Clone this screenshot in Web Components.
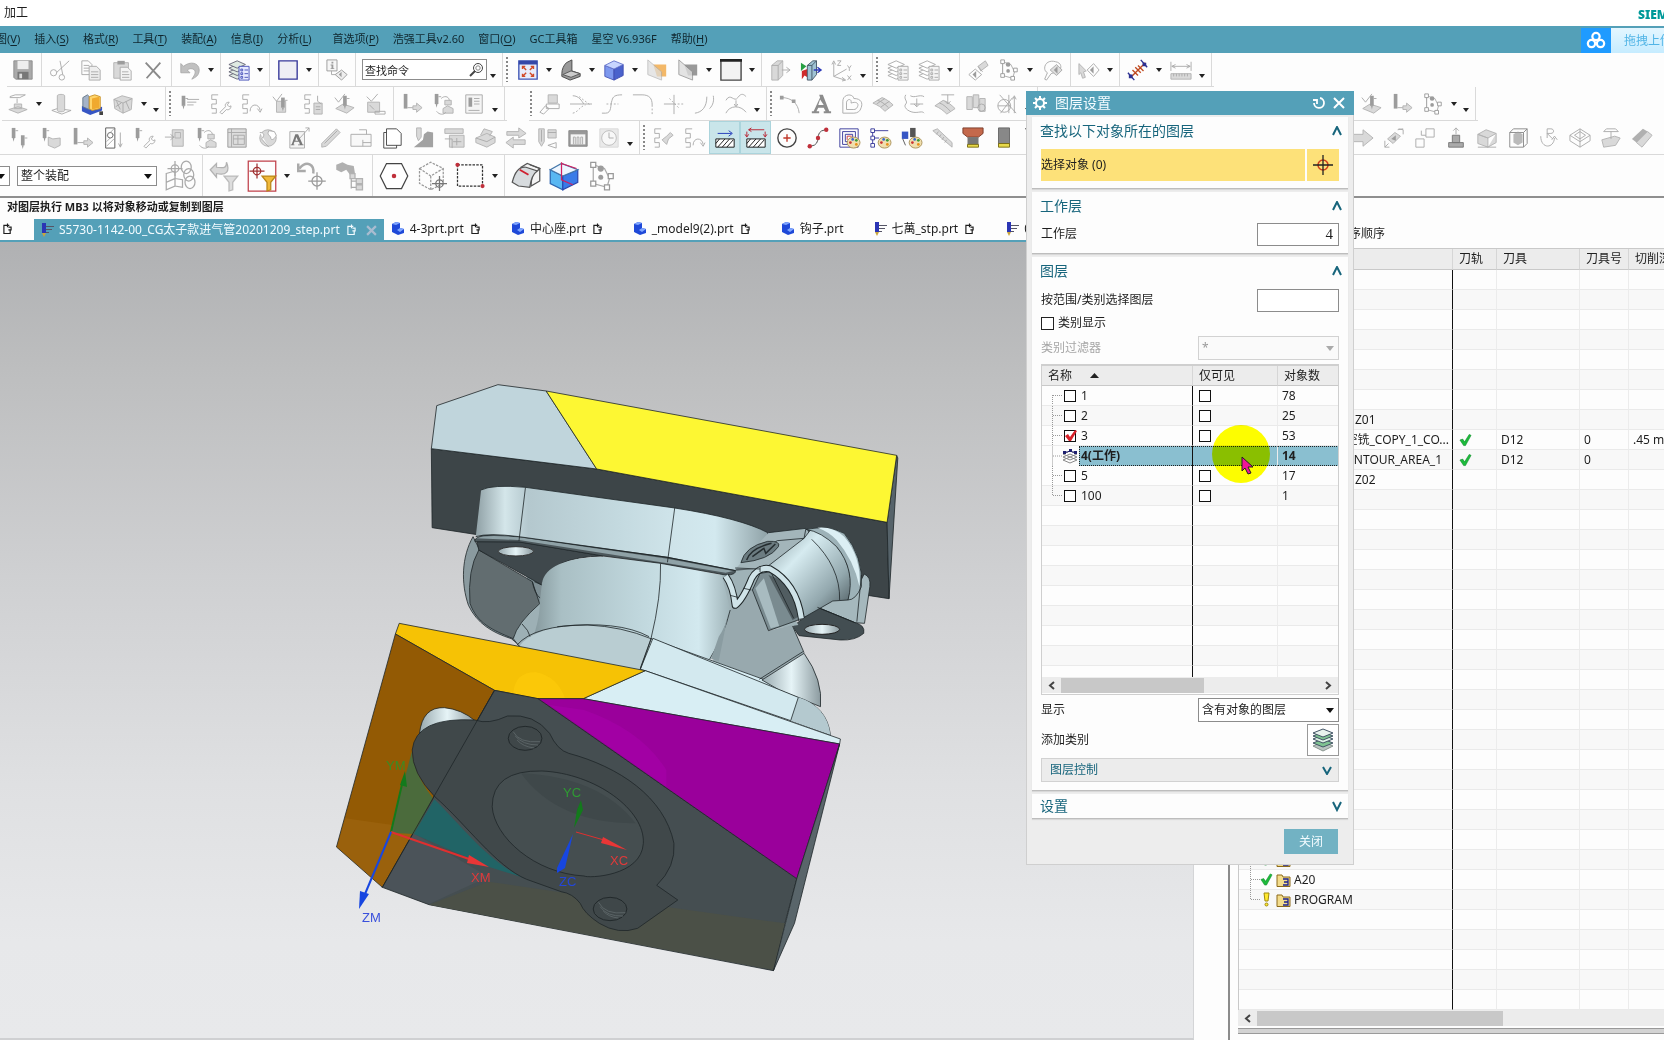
<!DOCTYPE html>
<html lang="zh-CN">
<head>
<meta charset="utf-8">
<title>加工</title>
<style>
html,body{margin:0;height:100%}
body{font-family:"Noto Sans","Noto Sans CJK SC",sans-serif;font-size:12px;line-height:16px;color:#1e1e1e;background:#fdfdfd;overflow:hidden}
</style>
</head>
<body>
<nx-app></nx-app>
<script>
const SHEET = '*{box-sizing:border-box}button{font:inherit;color:inherit;background:none;border:0;padding:0;margin:0}input,select{font:inherit;color:inherit;margin:0;border-radius:0}a{color:inherit;text-decoration:none}';
function define(name, css, html, init) {
  customElements.define(name, class extends HTMLElement {
    connectedCallback() {
      if (this.shadowRoot) return;
      const root = this.attachShadow({ mode: 'open' });
      root.innerHTML = '<style>' + SHEET + css + '</style>' + (typeof html === 'function' ? html(this) : html);
      if (init) init(root, this);
    }
  });
}

/* ---------- icon library, 24 x 24 grid ---------- */
const tool = (x, y) => `<path class="d" d="M${x} ${y}h4v11h-4z"/><path class="d" d="M${x + 1} ${y + 11}h2l-1 4z"/><path class="g" d="M${x + 4} ${y + 3}h3"/>`;
const squig = '<path class="g" d="M10 2H3v5h5v5H3v5h5v5H3"/>';
const stack = (c, f) => `<g fill="${f}" stroke="${c}"><path d="M1 18l9-4 9 4-9 4z"/><path d="M1 14l9-4 9 4-9 4z"/><path d="M1 10l9-4 9 4-9 4z"/><path d="M1 6l9-4 9 4-9 4z"/></g>`;
const list = (c, f) => `<path fill="${f}" stroke="${c}" d="M12 8h11v15H12z"/><path stroke="${c}" fill="none" d="M14 11h2v2h-2zM14 15h2v2h-2zM14 19h2v2h-2zM18 12h4M18 16h4M18 20h4"/>`;
const palette = '<ellipse cx="17" cy="17" rx="7" ry="6" fill="#f0dfae" stroke="#a89058"/><circle cx="13.5" cy="17" r="1.5" fill="#c33"/><circle cx="16" cy="13.5" r="1.5" fill="#3a6ad0"/><circle cx="20" cy="14.5" r="1.5" fill="#3a9a3a"/><circle cx="20" cy="19" r="1.5" fill="#e8901a"/>';
const wrench = '<path class="g" d="M12 21l6-6c-1-3 1-5 4-5l-2 3 2 2 2-1c0 3-2 5-5 4l-5 5z"/>';
const nodes = '<path class="g" d="M5 3l9 3 4 8-2 7-11-3zM5 3v15"/><path fill="#fff" stroke="#999" d="M3 1h4v4H3zM3 16h4v4H3zM14 19h4v4h-4zM17 10h4v4h-4z"/><circle class="d" cx="11" cy="6" r="2.5"/><circle class="d" cx="11" cy="13" r="2"/>';
const funnel = (x, y, f, s) => `<path fill="${f}" stroke="${s}" d="M${x} ${y}h11l-4 5v6l-3 1v-7z"/>`;
const cross = (x, y, r, c) => `<circle cx="${x}" cy="${y}" r="${r}" fill="none" stroke="${c}"/><path stroke="${c}" d="M${x - r - 3} ${y}h${2 * r + 6}M${x} ${y - r - 3}v${2 * r + 6}"/>`;
const I = {
  save: '<path fill="#aaa" stroke="#8e8e8e" d="M2 2h20v20H4l-2-2z"/><path fill="#eee" d="M6 2h12v9H6z"/><path fill="#777" d="M6 14h12v8H6z"/><path fill="#ddd" d="M8 16h3v5H8z"/>',
  cut: '<path class="g" d="M22 2L8 15M12 2l3 15"/><circle class="g" cx="5" cy="15" r="3.4"/><circle class="g" cx="14" cy="20" r="3"/>',
  copy: '<path class="g" d="M2 2h7l4 4v11H2zM4 7h6M4 10h6M4 13h6"/><path fill="#eee" stroke="#aaa" d="M10 8h8l4 4v11H10z"/><path class="g" d="M12 14h8M12 17h8M12 20h8"/>',
  paste: '<path class="f" d="M3 4h16v17H3z"/><path class="d" d="M7 2h8v4H7z"/><path fill="#f4f4f4" stroke="#aaa" d="M10 9h8l4 4v10H10z"/><path class="g" d="M12 14h7M12 17h8M12 20h8"/>',
  del: '<path stroke="#8a8a8a" stroke-width="2" d="M4 4l16 17M20 4L5 21"/>',
  undo: '<path fill="#c0c0c0" stroke="#aaa" d="M2 5l3 3c7-6 17-4 17 4 0 6-4 8-8 10 2-3 5-7 3-10-2-2-6-2-8 0l3 3H2z"/>',
  layers: stack('#667', '#dfeae2') + list('#4650b8', '#e6eaff'),
  layersG: stack('#aaa', '#fff') + list('#aaa', '#f4f4f4'),
  layersG2: stack('#aaa', '#fff') + list('#aaa', '#f4f4f4'),
  square: '<path fill="#eeeef4" stroke="#37399a" stroke-width="1.5" d="M2 2h20v20H2z"/>',
  info: '<path fill="#f6f6f6" stroke="#999" d="M1 1h11v12H1z"/><path class="d" d="M6 3h2v2H6zM5 6h3v4h1v1H5v-1h1V7H5z"/><path fill="#eee" stroke="#999" d="M10 17l7-5 6 5-6 6z"/><path class="d" d="M14 17l3-3v6z"/><path class="g" d="M6 13v4h4"/>',
  fit: '<path fill="#e8ecfa" stroke="#3f55b5" stroke-width="1.5" d="M2 2h20v20H2z"/><path fill="#3547a8" d="M2 2h20v4H2z"/><path stroke="#d04a28" stroke-width="1.5" fill="none" d="M6 11V8h3M15 8h3v3M18 16v3h-3M9 19H6v-3M6 8l4 4M18 8l-4 4M18 19l-4-4M6 19l4-4"/>',
  orient: '<path fill="#999" stroke="#444" d="M2 16c0-5 2-9 5-12l6-3v12l9 3v3l-11 4-9-4z"/><path fill="#ccc" stroke="#555" d="M3 17l9-4 10 3-10 4z"/>',
  cube: '<path fill="#7d98ee" stroke="#4a59b8" d="M2 7v12l10 4V11z"/><path fill="#4a62cc" stroke="#3f4db0" d="M22 6v12l-10 5V11z"/><path fill="#c8d6ff" stroke="#6675cc" d="M2 7l10-5 10 4-10 5z"/>',
  plane: '<path fill="#f3b868" d="M8 6h14v13H12z"/><path fill="#ddd" stroke="#aaa" d="M2 1l15 13v9L2 17z" opacity=".7"/>',
  plane2: '<path fill="#999" d="M8 6h14v12H12z"/><path fill="#ddd" stroke="#888" d="M2 1l15 13v9L2 17z" opacity=".8"/>',
  window: '<path fill="#f2f2f2" stroke="#444" stroke-width="1.5" d="M1 1h22v22H1z"/><path fill="#222" d="M0 0h24v3H0z"/>',
  section: '<path class="f" d="M3 7l6-5h6v16l-5 5H3z"/><path class="g" d="M10 7v16M3 7h7l5-5"/><path class="g" d="M14 12h8m-3-3l4 3-4 3"/>',
  sectionC: '<path fill="#27a043" d="M1 4l6 4-6 5z"/><path fill="#cf2b2b" d="M2 13l6-2v9l-3-2-3 4z"/><path fill="#9fc3d4" stroke="#456" d="M8 7l6-5h4v15l-5 6H8z"/><path fill="none" stroke="#456" d="M8 7h5l5-5M13 7v16"/><path stroke="#2c39b8" stroke-width="1.5" fill="none" d="M15 12h7m-3-3l4 3-4 3"/>',
  csys: '<path class="g" d="M3 4v15l12 4M3 19l14-8M1 6l2-4 2 4M12 20l4 3-4 1"/><path class="g" d="M7 2h4L7 7h4M18 7l2 3 2-3M20 10v3M18 18l4 5M22 18l-4 5"/>',
  brush: '<path class="f" d="M12 8l8-6 3 5-8 6z"/><path class="g" d="M12 8l5 6M2 17l7-6 7 6-7 6z"/><path class="d" d="M6 17l4-4v8z"/>',
  nodes,
  palG: '<path class="g" d="M4 10c0-6 6-9 12-7 6 1 7 6 4 10l-9 3-5 7-2-1 3-7c-2-1-3-3-3-5z"/><path fill="#ddd" stroke="#aaa" d="M10 12l7-6 6 6-6 6z"/><path class="d" d="M14 12l4-4v8z"/>',
  dia: '<path class="f" d="M1 5l8 8-3 1 2 6-3 1-2-6-2 2z"/><path class="g" d="M10 12l7-7 6 7-6 7z"/><path class="d" d="M13 12l4-4v8z"/>',
  measure: '<path stroke="#c04a20" stroke-width="1.5" d="M5 19L20 4M6 12l6 6M9 9l6 6M12 7l6 6"/><path stroke="#2d3192" stroke-width="1.5" d="M1 15l7 8M15 1l7 8"/><path fill="#2d3192" d="M2 17h4v4H2zM17 4h4v4h-4z"/>',
  ruler: '<path class="g" d="M1 3v10M23 3v10M2 8h20M6 6L2 8l4 2M18 6l4 2-4 2"/><path class="f" d="M1 16h22v6H1z"/><path class="g" d="M4 16v3M7 16v3M10 16v3M13 16v3M16 16v3M19 16v3"/>',
  feat: '<path class="f" d="M2 18l10-3 10 3-10 4zM8 12h8v5H8z"/><path class="g" d="M3 4l6-2h11l-6 3H3M11 6v5"/>',
  block: '<path class="f" d="M8 3c0-2 8-2 8 0v16c0 2-8 2-8 0z"/><path class="g" d="M2 19l6-2M16 18l7 1-10 4-11-4"/>',
  asm: '<path fill="#3656c4" d="M1 14l9 4 13-3v4l-13 5-9-4z"/><path fill="#a5b3c8" stroke="#678" d="M2 5l5-3 2 2v14l-7-3z"/><path fill="#ffd469" stroke="#c8922a" d="M9 4l6-2 6 2v13l-9 2-3-2z"/><path fill="#f0a92e" d="M12 6l8-2v12l-8 2z"/><path fill="#444" d="M20 20h4v4h-4z"/>',
  crack: '<path class="f" d="M2 7l9-4 11 3-1 12-9 4-9-5z"/><path class="g" d="M2 7l10 4 10-5M12 11v11M5 9l4 9M15 9l4 9M4 15l6-4"/>',
  t1: tool(4, 3) + '<path class="g" d="M10 7h13M10 10h10M10 13h7"/>',
  t2: squig + wrench,
  t3: squig + '<path class="g" d="M11 20c0-9 10-9 11-1m-3-2l3 4 2-4"/>',
  t4: '<path class="f" d="M6 9h10v12H6z"/>' + tool(11, 5) + '<path class="g" d="M2 4l4 5 6-8"/>',
  t5: squig + '<path class="f" d="M13 11h9v12h-9z"/><path class="g" d="M17 3v6l4 3M15 15h5M15 18h5"/>',
  t6: '<path class="f" d="M3 17l8-5 12 4-8 6z"/>' + tool(11, 3) + '<path class="g" d="M2 5l4 5 7-9"/>',
  t7: '<path class="f" d="M4 10h13v11H4z"/><path class="g" d="M3 4l5 5 7-8M6 13l5 5M12 20h11v3H12z"/>',
  t8: '<path class="d" d="M3 1h4v16H3z"/><path class="g" d="M7 16h6"/><path class="f" d="M13 14h4v-3l6 5-6 5v-3h-4z"/>',
  t9: '<path class="f" d="M14 8h7v5h-7zM12 17l5-3 6 3v5H12z"/>' + tool(3, 1) + '<path class="g" d="M10 6c3-3 8-3 9 2M5 20c3 4 8 4 10 1"/>',
  t10: '<path fill="#f4f4f4" stroke="#aaa" d="M3 2h18v20H3z"/><path class="d" d="M6 5h4v10H6z"/><path class="g" d="M12 6h6M12 9h6M12 12h6M6 19h12"/>',
  c1: '<path class="f" d="M10 2h10v9H10z"/><path class="g" d="M8 12h14v5H8zM1 21l6-7 4 3-6 6z"/>',
  c2: '<path class="g" d="M0 12h24M3 3c7 0 10 6 12 9"/><path class="g" stroke-dasharray="2 2" d="M10 4l12 9M3 22c6-1 7-7 14-9"/>',
  c3: '<path class="g" d="M1 22h4c7 0 5-9 7-14 1-4 3-6 11-6"/><path class="g" stroke-dasharray="2 2" d="M6 12h13"/>',
  c4: '<path class="g" d="M1 2h10c8 0 11 4 11 11"/><path class="g" stroke-dasharray="2 2" d="M22 13v10"/>',
  c5: '<path class="g" d="M1 12h11v11M12 2v10"/><path class="g" stroke-dasharray="2 2" d="M12 12h12M7 6l10 10"/>',
  c6: '<path class="g" d="M1 22c8-1 13-7 13-18M17 17c4-4 5-9 4-14"/>',
  c7: '<path class="g" d="M1 8c5-9 9 3 13-3s7-3 9-1M1 22c4-9 16-9 22-1M12 8v6m-2-2l2 3 2-3"/>',
  arc: '<path class="g" d="M3 5c10 0 18 6 19 17"/><path class="d" d="M1 3h4v4H1zM14 7h4v4h-4z"/>',
  bigA: '<path fill="#8c8c8c" d="M10 2h4l7 18h2v2h-8v-2h2l-2-4H9l-2 4h3v2H2v-2h2L11 5zm1 5l-2 6h6z"/>',
  offs: '<path class="g" d="M2 22V9c0-8 11-9 12-3 8 0 10 5 8 10-1 4-4 6-8 6z"/><path class="g" d="M6 18v-8c1-4 6-4 5 1 5-2 9 0 7 4-1 2-2 3-4 3z"/>',
  surf: '<path class="f" d="M1 11l10-6c3 1 8 4 12 8l-9 7C11 16 6 13 1 11z"/><path class="g" d="M6 8c4 1 8 4 12 8M5 12l9-6M10 15l9-6"/>',
  surf2: '<path class="f" d="M1 14l9-6c4 1 9 5 13 9l-9 6C10 19 6 16 1 14z"/><path class="g" d="M8 2h14M15 2v10m-3-3l3 3 3-3M6 11c4 1 8 5 12 9"/>',
  proj: '<path class="g" d="M3 2c-3 5 3 7 0 10s2 8 8 9 10-2 12 1M8 3c5 3 10-2 15 1M8 12h14"/><path class="g" d="M15 6v9m-3-3l3 3 3-3"/>',
  mir: '<path class="f" d="M2 4h6v14H2zM9 2h6v14H9zM16 6h6v14h-6z"/><circle class="g" cx="18" cy="16" r="4"/>',
  trimc: '<circle class="g" cx="9" cy="14" r="7"/><path class="g" d="M4 2l18 20M14 2v20M20 4v18M18 7l2-4 2 4M2 14h14M5 22L18 5"/>',
  u1: tool(3, 1) + tool(13, 9), u2: tool(3, 1) + '<path class="f" d="M9 11l5 2 8-1v8l-6 3-7-3z"/>',
  u3: '<path class="d" d="M3 1h4v18H3z"/><path class="g" d="M7 17h7"/><path class="f" d="M14 15h4v-3l6 5-6 5v-3h-4z"/>',
  u4: '<path fill="#fff" stroke="#555" d="M4 1h10v22H4z"/><path class="g" stroke="#777" d="M5 10l8-8M5 16l8-8M5 21l8-8M20 6v15m-2-3l2 4 2-4"/><circle cx="9" cy="9" r="3" fill="#fff" stroke="#666"/>',
  u5: tool(3, 1) + wrench, u6: '<path class="f" d="M9 3h12v18H9zM12 6h6v6h-6z"/><path class="g" d="M1 11h9m-3-3l4 3-4 3"/>',
  u7: '<path fill="#ddd" stroke="#999" d="M2 2h20v20H2z"/><path class="g" stroke="#888" d="M2 6h20M6 2v20M8 9h12v10H8zM8 13h12M13 9v10"/>',
  u8: '<circle class="f" cx="12" cy="12" r="9"/><path fill="#fff" stroke="#aaa" d="M3 6c6 0 5 4 2 7l8 9M13 4c-3 5 2 5 2 8s4 2 6-3l-2-4z"/>',
  u9: '<path fill="#f4f4f4" stroke="#aaa" d="M2 5h16v18H2z"/><path fill="#777" d="M8 8h3l5 11h1v1h-6v-1h2l-1-3H7l-1 3h1v1H3v-1h1zm1 3l-1 4h3z"/><path class="g" d="M13 12L23 1M19 1h4v4"/>',
  u10: '<path class="f" d="M3 18L19 2l4 4L8 21l-5 1z"/><path class="g" d="M6 18L20 4"/>',
  u11: '<path fill="#f8f8f8" stroke="#aaa" d="M1 8h22v13H1z"/><path class="g" d="M10 3h8v5M14 17h9M14 14v7"/>',
  u12: '<path fill="#fff" stroke="#444" d="M3 6h14v17H3z"/><path fill="#fff" stroke="#444" d="M6 2h11l5 5v13H6z"/>',
  u13: '<path fill="#a2a2a2" d="M2 22l10-8 1-6 4-3 6 1v16z"/><path class="f" d="M5 1h5v10l-3 4-2-5z"/>',
  u14: '<path class="f" d="M2 2h20v5H2zM7 9h16v13H7z"/><path class="g" d="M2 13h8v10M15 12v8M11 16h9"/>',
  u15: '<path class="f" d="M2 12l12-5 9 4v6l-9 5-12-5zM7 9l4-7 9 3-3 5"/><path class="g" d="M2 12l12 4 9-5"/>',
  u16: '<path class="f" d="M2 5h13V1l8 6-8 5V9H2zM22 14H9v-3l-8 6 8 6v-4h13z"/>',
  u17: '<path class="f" d="M3 2h6v14l-3 5-3-5zM13 3h9v9h-9z"/><path class="g" d="M6 3v13M13 6h9M13 20l9-3v6z"/>',
  u18: '<path fill="#999" stroke="#888" d="M2 4h20v17H2z"/><path fill="#f4f4f4" d="M4 8h16v11H4z"/><path class="g" d="M7 19v-8h2v8M11 19v-8h2v8M15 19v-8h2v8"/>',
  u19: '<path class="f" d="M2 2h20v20H2z" opacity=".5"/><circle fill="#f8f8f8" stroke="#bbb" cx="12" cy="12" r="8"/><path class="g" d="M12 6v6h5"/>',
  w1: squig + '<path class="f" d="M11 14l5 5 2-6 5-4-3-3-4 4z"/>',
  hatchB: '<path fill="#fff" stroke="#111" d="M2 13h20v9H2z"/><path stroke="#111" d="M4 22l8-9M9 22l8-9M14 22l7-8M2 18l4-5"/><path stroke="#1b32b8" fill="none" d="M4 7h15m-3-3l4 3-4 3"/>',
  hatchR: '<path fill="#fff" stroke="#111" d="M2 13h20v9H2z"/><path stroke="#111" d="M4 22l8-9M9 22l8-9M14 22l7-8M2 18l4-5"/><path stroke="#b81b2b" fill="none" d="M4 3h17m-14-2L4 3l3 2M2 10V5M22 10V5M0 8l2 3 2-3M20 8l2 3 2-3"/>',
  circ: '<circle cx="12" cy="12" r="10" fill="none" stroke="#444" stroke-width="1.5"/><path stroke="#c0392b" stroke-width="1.5" d="M12 8v8M8 12h8"/>',
  spl: '<path fill="none" stroke="#444" d="M4 21c14-2 2-16 16-18"/><circle cx="3" cy="21" r="2.4" fill="#c0303b"/><circle cx="12" cy="12" r="2.4" fill="#c0303b"/><circle cx="21" cy="3" r="2.4" fill="#c0303b"/>',
  p1: '<path fill="none" stroke="#37399a" d="M2 2h20v20H2zM5 5h14v14H5zM8 8h8v8H8z"/><path fill="none" stroke="#c33" d="M10 14v-4h5"/>' + palette,
  p2: '<path fill="none" stroke="#37399a" d="M2 2h4v4H2zM2 10h4v4H2zM2 18h4v4H2zM4 6v4M4 14v4M6 4h15M6 12h5"/>' + palette,
  p3: '<path fill="#555" d="M11 1h6v10h-6z"/><path fill="#3656c4" d="M2 5h7v8H2z"/><path stroke="#555" d="M3 13l3 7"/>' + palette,
  cali: '<path class="f" d="M2 4l5-2 16 15v5z"/><path class="g" d="M6 8l2-3M9 11l2-3M12 14l2-3M15 17l2-3"/>',
  tc1: '<path fill="#c4694c" stroke="#7a3a28" d="M1 1h22v6l-5 4H6L1 7z"/><path fill="#777" d="M6 11h12v8H6z"/><path fill="#e8d94a" stroke="#776a10" d="M6 19h12v3H6z"/>',
  tc2: '<path fill="#888" stroke="#666" d="M6 1h12v18H6z"/><path fill="#e8d94a" stroke="#776a10" d="M6 18h12v4H6z"/>',
  tc3: '<path fill="#666" d="M1 1h22v5l-5 5H6z"/>',
  arw: '<path class="f" d="M1 8h11V3l11 9-11 9v-5H1z"/>',
  rot: '<path class="f" d="M5 13l8-7 6 4-8 8z"/><path class="d" d="M9 13l5-4v6z"/><path class="g" d="M17 2l5 1v5M2 15v7h5M16 3l6-1M2 22l4-4"/>',
  sq2: '<path class="g" d="M13 2h9v9h-9zM2 13h9v9H2zM8 4v5h5"/>',
  ped: '<path fill="#aaa" stroke="#777" d="M8 9h8v8H8zM4 17h16v5H4z"/><path class="g" d="M12 8V1m-3 3l3-3 3 3"/>',
  bx: '<path class="f" d="M2 8l9-5 11 4-9 5zM2 8v10l11 4V12zM22 7v10l-9 5"/><path class="g" d="M2 22h20"/>',
  bx2: '<path class="g" style="stroke:#888" d="M3 6l4-4h15v16l-4 4H3zM3 6h15v16M18 6l4-4"/><path class="d" opacity=".7" d="M7 8l5-3 5 3v9l-5 3-5-3z"/>',
  rR: '<path class="g" d="M3 10c0 14 14 14 15 2M10 12V2h4c4 0 4 5 0 5h-4l6 6M15 14l3-4 3 4"/>',
  iso: '<path class="g" d="M1 9l11-7 11 7-11 7zM1 9v6l11 7 11-7V9M6 9l6-4 6 4-6 4zM12 2v20"/>',
  sw: '<path class="f" d="M2 14l14-4 6 2-5 8-13 2z"/><path class="g" d="M4 5h16l-3-3H7zM12 5v8"/>',
  bar: '<path class="d" opacity=".8" d="M1 13L13 2l5 3L6 17z"/><path class="f" d="M6 17L18 5l5 4-11 13z"/>',
  as: cross(8, 6, 3, '#aaa') + '<path class="g" d="M1 10l7-2v6l-7 3zM1 17l7-3v6l-7 3zM8 14l6 1v6l-6-1z"/><ellipse class="g" cx="17" cy="5" rx="4" ry="5"/><ellipse class="g" cx="19" cy="11" rx="4" ry="5"/><ellipse class="g" cx="20" cy="17" rx="4" ry="5"/>',
  fG: '<path class="f" d="M1 7l5-5v3c7 1 8 0 8-4 3 7 0 11-8 9v3z"/>' + funnel(12, 12, '#ddd', '#bbb'),
  fC: '<path fill="none" stroke="#c0404a" d="M1 0h22v24H1z"/>' + cross(8, 8, 3, '#a03030') + funnel(12, 12, '#f0b93a', '#b98518'),
  undoX: '<path class="g" stroke-width="2" d="M2 6c6-7 12-3 11 4M1 2v6h6"/>' + cross(16, 16, 4, '#999'),
  bino: '<path class="d" opacity=".8" d="M1 3l5-2 4 2 5 1 1 6-4 1-3-4-4 2-4-2z"/><path class="g" d="M13 12v10M13 16h4M13 21h4"/><path class="f" d="M12 10h4v4h-4zM17 14h5v4h-5zM17 19h5v4h-5z"/>',
  hex: '<path fill="#fff" stroke="#444" d="M6 2h12l5 10-5 10H6L1 12z"/><circle cx="12" cy="12" r="1.8" fill="#c0303b"/>',
  hexC: '<path class="g" style="stroke:#999" stroke-dasharray="2 1" d="M2 6l9-5 10 5v12l-10 5-9-5zM2 6l9 6 10-6M11 12v11"/>' + cross(18, 18, 3, '#777'),
  rect: '<path fill="none" stroke="#333" stroke-dasharray="2 1" d="M2 3h20v17H2z"/><circle cx="2" cy="3" r="1.7" fill="#c0303b"/><circle cx="22" cy="20" r="1.7" fill="#c0303b"/>',
  sweep: '<path fill="#f4f4f4" stroke="#555" d="M8 5l5-3 10 4v10l-7 4 1-11z"/><path fill="#d7dbde" stroke="#555" d="M1 17C3 9 6 4 12 5l9 3c-3 2-5 6-6 13l-9-1z"/><path fill="none" stroke="#555" d="M15 3l8 3-2 2"/><path stroke="#d02030" stroke-width="1.5" d="M7 7l7 4"/>',
  box3: '<path fill="#59b7f2" stroke="#2d66b0" d="M1 7l10 5v11L1 18z"/><path fill="#3a7be8" stroke="#2d49b0" d="M23 7l-12 5v11l12-6z"/><path fill="#eef6ff" stroke="#47a" d="M1 7l9-5 13 5-12 5z"/><path fill="none" stroke="#d02060" d="M10 1v14l9 4M10 2l12 4"/>'
};
define('nx-icon', ':host{display:inline-block;width:24px;height:24px;flex:none}svg{display:block;width:100%;height:100%;overflow:visible}.g{fill:none;stroke:#aaa}.f{fill:#d9d9d9;stroke:#b2b2b2}.d{fill:#9c9c9c}',
  el => `<svg viewBox="0 0 24 24" fill="none" aria-hidden="true">${I[el.getAttribute('name')] || ''}</svg>`);

/* ---------- tool bars: icon names, v = drop-down, _ = overflow, | = separator, : = grip ---------- */
define('tool-group', `:host{display:flex;align-items:stretch;border-bottom:1px solid #d9d9d9;height:34px;--cell:31px}
:host([big]){height:41px;--cell:38px;border-bottom:0}:host([big]) nx-icon{width:30px;height:30px}
:host([grow]){flex:1}
button{width:var(--cell);flex:none;display:flex;align-items:center;justify-content:center}
button.on{background:#c9e5ea;border:1px solid #abd4dc}
nx-icon{width:22px;height:22px}
.v,.o{width:12px}.v svg,.o svg{width:6px;height:4px}.o{align-items:flex-end;padding-bottom:8px}
i{width:6px;flex:none;display:flex;justify-content:center}i::before{content:"";width:1px;background:#dadada}
b{width:var(--grip,7px);flex:none;margin:4px 0;background:repeating-linear-gradient(#888 0 2px,transparent 2px 4px) 1px 0/2px 100% no-repeat}`,
  el => el.getAttribute('items').split(/\s+/).map(t => {
    const tri = '<svg viewBox="0 0 6 4"><path d="M0 0h6L3 4z" fill="#222"/></svg>';
    if (t === 'v') return `<button class="v" aria-label="展开">${tri}</button>`;
    if (t === '_') return `<button class="o" aria-label="更多">${tri}</button>`;
    if (t === '|') return '<i></i>';
    if (t === ':') return '<b></b>';
    if (t === '#') return '<slot></slot>';
    const on = t[0] === '+'; if (on) t = t.slice(1);
    return `<button class="${on ? 'on' : ''}" aria-label="${t}"><nx-icon name="${t}"></nx-icon></button>`;
  }).join(''));

define('command-search', `:host{display:flex;align-items:center;margin-left:4px}
label{display:flex;align-items:center;width:125px;height:21px;border:1px solid #8c8c8c;background:#fff}
input{width:95px;border:0;outline:0;padding:0 0 0 2px;background:none;font-size:11px;height:18px}
svg{width:16px;height:16px;margin-left:auto;margin-right:2px}`,
  '<label><input aria-label="查找命令" value="查找命令"><svg viewBox="0 0 16 16" fill="none" stroke="#444"><circle cx="10" cy="6" r="4.5"/><circle cx="10" cy="6" r="2.2" stroke="#888"/><path d="M7 9l-5 5" stroke-width="2"/></svg></label>');

define('combo-box', `:host{display:block;position:relative}
select{appearance:none;width:100%;height:100%;border:1px solid #8c8c8c;background:#fff;padding:0 20px 0 var(--pad,3px);outline:0;font-size:inherit;opacity:1}
svg{position:absolute;right:5px;top:50%;margin-top:-2px;width:8px;height:5px;fill:#111;pointer-events:none}
:host([off]) select{border-color:#d2d2d2;color:#999;background:#fafafa}:host([off]) svg{fill:#aaa}`,
  el => `<select aria-label="${el.getAttribute('label')}" ${el.hasAttribute('off') ? 'disabled' : ''}><option>${el.getAttribute('value')}</option></select><svg viewBox="0 0 8 5"><path d="M0 0h8L4 5z"/></svg>`);

define('title-bar', `:host{display:flex;align-items:center;height:26px;padding-left:4px;background:#fff;overflow:hidden}
strong{margin-left:auto;width:26px;overflow:visible;color:#009999;font:900 12px/16px "Noto Sans",sans-serif;margin-top:3px}`,
  '<span>加工</span><strong>SIEMENS</strong>');

define('menu-bar', `:host{display:flex;align-items:center;height:27px;background:#54a0b8;font-size:11px;overflow:hidden;color:#10262e}
nav{display:flex;gap:14px;margin-left:-15px;padding-bottom:2px;white-space:nowrap}.gap{margin-left:7px}u{text-underline-offset:2px}
.up{margin-left:auto;display:flex;align-self:stretch;padding-top:2px;font-size:12px;width:83px;flex:none}
.up svg{flex:none;width:30px;height:25px;background:#1f9bff;padding:2px}
.up span{flex:none;width:80px;background:linear-gradient(#e4f6ff,#c6ecff);color:#50b4e6;padding:5px 0 0 13px}`,
  () => '<nav>' + ['视图(V)', '插入(S)', '格式(R)', '工具(T)', '装配(A)', '信息(I)', '分析(L)', '*首选项(P)', '浩强工具v2.60', '窗口(O)', 'GC工具箱', '星空 V6.936F', '帮助(H)'].map(m => {
    const c = m[0] === '*' ? 'gap' : ''; m = m.replace('*', '').replace(/\((.)\)/, '(<u>$1</u>)');
    return `<a href="#" class="${c}">${m}</a>`;
  }).join('') + '</nav><a href="#" class="up"><svg viewBox="0 0 30 24" fill="none" stroke="#fff" stroke-width="2.6"><circle cx="15" cy="7.5" r="4.2"/><circle cx="9.8" cy="15.5" r="4.2"/><circle cx="20.2" cy="15.5" r="4.2"/></svg><span>拖拽上传</span></a>');

const partIcon = '<svg viewBox="0 0 14 14"><path fill="#1f49d8" d="M1 2l4-2 4 1v5l4 1v4l-6 2-6-3z"/><path fill="#7fa6ff" d="M1 2l4-2 4 1-4 2zM6 8l3-2 4 1-4 3z"/></svg>';
const camIcon = '<svg viewBox="0 0 14 14"><path fill="#2b35b5" d="M2 0h4v10H2z"/><path fill="#c9a53a" d="M2 10h4l-2 4z"/><path stroke="#556" d="M6 3.5h8M6 6.5h6M6 9.5h3"/></svg>';
const docIcon = '<svg class="doc" viewBox="0 0 10 12" fill="none" stroke="currentColor" stroke-width="1.3"><path d="M7 2H1v9h7V7M5 0v4M6 4h3v3H6"/></svg>';
define('file-tabs', `:host{display:flex;height:24px;border-bottom:2px solid #54a0b8;background:#fdfdfd;overflow:hidden;white-space:nowrap}
div{display:flex;align-items:center;flex:none;padding-left:7px;padding-right:24px}
div a{margin:0 7px 0 5px}.plain{padding-right:15px}svg{width:14px;height:14px;flex:none}.doc{width:9px;height:12px}
.on{background:#54a0b8;color:#f2fbff;padding:0 7px 0 6px;height:22px;margin-top:1px}
.first{width:34px;padding:0 0 0 3px}
.on button{margin-left:10px;width:11px;height:11px}.on button svg{width:11px;height:11px;display:block}`,
  () => {
    const t = (i, s, d) => `<div class="${d ? '' : 'plain'}">${i}<a href="#">${s}</a>${d ? docIcon : ''}</div>`;
    return `<div class="first">${docIcon}</div><div class="on">${camIcon}<a href="#">S5730-1142-00_CG太子款进气管20201209_step.prt</a>${docIcon}<button aria-label="关闭选项卡"><svg viewBox="0 0 10 10"><path stroke="#a9bcd0" stroke-width="2" d="M1 1l8 8M9 1L1 9"/></svg></button></div>`
      + t(partIcon, '4-3prt.prt', 1) + t(partIcon, '中心座.prt', 1) + t(partIcon, '_model9(2).prt', 1) + t(partIcon, '钩子.prt', 0) + t(camIcon, '七萬_stp.prt', 1) + t(camIcon, '0', 0);
  });

/* ---------- shaded model in the graphics window ---------- */
define('cad-viewport', `:host{display:block;position:relative;flex:1;min-height:0;overflow:hidden;background:linear-gradient(#b0b1b3,#bdbebf 16%,#cfd0d2 42%,#dfe0e2 68%,#e7e8ea 88%,#e8e9eb);border-right:1px solid #d4d5d7;border-bottom:2px solid #cfd0d2}
svg{position:absolute;left:0;top:0;width:1193px;height:798px}
.e *{vector-effect:non-scaling-stroke}.e path:not([stroke]){stroke:#1e2628;stroke-width:.8px}
text{font:13px "Liberation Sans",sans-serif}`,
`<svg viewBox="0 242 1193 798" role="img" aria-label="模型">
<defs>
<linearGradient id="a"><stop offset="0" stop-color="#8fa0a5"/><stop offset=".1" stop-color="#d4e6ea"/><stop offset=".18" stop-color="#b4c8ce"/><stop offset=".5" stop-color="#c4dae0"/><stop offset=".68" stop-color="#cfe4ea"/><stop offset=".82" stop-color="#d3e9ef"/><stop offset="1" stop-color="#8fa2a7"/></linearGradient>
<linearGradient id="b"><stop offset="0" stop-color="#738488"/><stop offset=".2" stop-color="#a9bfc4"/><stop offset=".6" stop-color="#c2d9df"/><stop offset=".85" stop-color="#d3e9ef"/><stop offset="1" stop-color="#9fb3b8"/></linearGradient>
<linearGradient id="c" x1="0" y1="0" x2="1" y2="1"><stop offset="0" stop-color="#7b8d92"/><stop offset=".35" stop-color="#d6ebf0"/><stop offset=".7" stop-color="#93a8ae"/><stop offset="1" stop-color="#3c484c"/></linearGradient>
<linearGradient id="d"><stop offset="0" stop-color="#98a9ae"/><stop offset=".5" stop-color="#e6f4f7"/><stop offset="1" stop-color="#8b9a9f"/></linearGradient>
</defs>
<g class="e" transform="translate(320 370) scale(.38265 .33333)" fill="none">
<path fill="#3d4548" d="M291 236L723 297 1482 457 1487 686 293 473z"/>
<path fill="#56636a" d="M1507 256l3 8-23 422-5-229z"/>
<path fill="#c0d5dc" d="M305 107L465 44 591 63 723 297 291 236z"/>
<path fill="#fdf733" d="M591 63L1507 256 1482 457 723 297z"/>
<path fill="#a5b8bd" d="M1300 712L1410 640 1422 612Q1440 620 1437 650L1423 760 1398 758z"/>
<path fill="#434e52" d="M1235 770L1300 712 1398 758Q1425 765 1421 790 1400 812 1360 810L1252 797z"/>
<ellipse cx="1312" cy="778" rx="46" ry="15" fill="url(#d)" stroke="#222"/>
<path fill="#8a9a9f" d="M400 500C370 560 368 640 388 706 410 760 450 788 500 806L520 825 555 745 415 535z"/>
<path fill="#7d8d92" stroke="none" d="M540 620L600 640 600 720 560 740z"/>
<path fill="#626d70" d="M415 540Q385 600 392 700C410 760 450 780 505 806Q515 770 575 705L555 635z"/>
<path fill="#9db0b5" d="M505 806Q515 760 575 700L640 690 620 840 520 828z"/>
<path d="M528 762Q545 780 550 802M560 635L580 645M555 635Q560 670 576 685"/>
<path fill="#3f484c" d="M410 515L520 515 740 558Q600 560 580 645L415 540z"/>
<ellipse cx="512" cy="544" rx="46" ry="14" fill="url(#d)" stroke="#333"/>
<path fill="#9fb2b7" stroke="none" d="M1045 605L1170 595 1250 765 1060 800z"/>
<path fill="#98a9ae" stroke="none" d="M1072 720L1130 650 1172 782 1235 765 1265 850 1155 930 1025 880z"/>
<path fill="url(#b)" stroke="none" d="M580 640Q590 565 740 560L890 580 1050 615 1072 720Q1055 800 1020 870L1000 900H520Q575 780 575 690z"/>
<path fill="#b9cdd2" stroke="none" d="M520 830Q560 765 700 765 790 770 865 806L835 900z"/>
<path fill="#d8eef4" stroke="none" d="M865 806L1015 868 1165 930 1230 965H820z"/>
<path d="M890 580Q892 680 865 806L837 895M515 825Q560 765 700 765 790 770 865 806L1265 972M620 770Q780 750 860 800M1072 720Q1055 800 1018 868"/>
<path fill="#8a9ca1" stroke="none" d="M1042 800Q1060 770 1066 735L1042 874 1022 866z"/>
<path fill="url(#d)" d="M1155 930L1265 850Q1315 930 1308 1010L1200 960z"/>
<path d="M1265 848L1235 768M1148 928L1262 845"/>
<path fill="#4d585c" d="M405 515Q400 495 470 493L520 500 908 562 1085 600Q1090 615 1060 615L890 580 740 558 520 516z"/>
<path fill="#8fa2a7" stroke="none" d="M408 505Q430 492 520 502L908 566 1080 603 1060 608 900 578 520 510z"/>
<path fill="url(#a)" stroke="none" d="M407 500L421 360Q450 343 537 352L927 414Q1100 445 1170 488L1170 520 1085 600 908 560 520 500Q440 488 407 500z"/>
<path d="M537 352L520 513M927 414L908 577M421 360Q450 343 537 352L927 414Q1100 445 1170 488V510M407 500Q440 488 520 500L908 562 1085 602"/>
<path fill="#a3b5ba" stroke="none" d="M1172 488L1270 475 1320 560 1250 640 1145 598 1085 598z"/>
<path fill="url(#c)" d="M1160 598L1265 505 1285 475Q1330 490 1370 560 1400 640 1380 690L1340 693 1250 752Q1270 640 1160 598z"/>
<path fill="#9db2b8" d="M1270 478Q1330 465 1370 490 1420 560 1415 650 1400 690 1380 690 1400 600 1350 530 1310 485 1270 478z"/>
<path fill="#dceff4" stroke="none" d="M1300 473Q1340 468 1370 500 1415 560 1410 650 1395 570 1350 510 1330 485 1300 473z"/>
<path fill="#7a8b90" d="M1130 660L1172 782 1250 750Q1270 650 1180 605L1150 610z"/>
<path fill="#a8bbc0" stroke="none" d="M1138 655L1178 775 1200 768 1160 625z"/>
<path fill="#515d61" stroke="none" d="M1172 615Q1265 650 1250 740L1235 750z"/>
<path stroke="#1e2628" stroke-width="7" stroke-linejoin="round" d="M1060 618Q1080 650 1085 706 1105 690 1128 625 1145 590 1175 596 1245 640 1258 745"/>
<path stroke="#cfe3e8" stroke-width="5" stroke-linejoin="round" d="M1060 618Q1080 650 1085 706 1105 690 1128 625 1145 590 1175 596 1245 640 1258 745"/>
<path d="M1172 488L1270 475 1265 505 1195 512 1120 565M1285 508Q1360 590 1358 690M1180 610L1238 745M1085 594L1150 597M1072 676l20 6M1107 655l20 5M1150 588v18"/>
<path fill="#6c7c81" d="M1100 578Q1110 530 1170 514 1205 512 1198 530 1175 570 1100 578z"/>
<path stroke="#252d30" stroke-width="1.5" d="M1115 570Q1125 535 1180 520M1130 560L1160 535 1165 550 1190 522"/>
<path d="M1415 615L1403 755M1300 712L1398 758"/>
</g>
<g class="e" transform="translate(320 610) scale(.38265 .33333)" fill="none">
<path fill="#d3e9ef" d="M870 85L1250 262Q1325 290 1334 375L1230 332 850 182 837 178z"/>
<path fill="#b4c9cf" stroke="none" d="M1250 262Q1325 290 1334 375L1230 332z"/>
<path d="M1250 262L1230 332M866 85L837 178"/>
<path fill="#d8eef4" d="M850 182L1360 387 1358 402 688 266z"/>
<path fill="#f6c205" d="M207 40L850 182 688 266 570 266 456 241 197 72z"/>
<path fill="#fdcb0a" stroke="none" opacity=".7" d="M505 250Q510 185 565 187 620 200 640 264L570 264z"/>
<path fill="#935a04" d="M197 72L456 241 163 832 43 711z"/>
<path fill="#9a610c" stroke="none" d="M66 625L250 655 163 830 45 711z"/>
<path fill="#454e51" d="M456 241L570 266 1246 806 1215 940 1185 1082 285 884 163 832z"/>
<path fill="#4b5359" stroke="none" d="M245 670L165 830 285 882 440 800z"/>
<path fill="#4b5047" stroke="none" d="M285 884L440 815 620 845 1215 940 1185 1080z"/>
<path fill="#9a009b" d="M570 266L688 266 1358 402 1246 806z"/>
<path fill="#a500a8" opacity=".7" stroke="none" d="M600 285L690 300Q840 360 905 480V530z"/>
<path fill="#59656a" d="M1358 402L1240 940 1185 1082 1246 806z"/>
<path fill="#4b6b3c" stroke="none" d="M240 425Q245 490 295 565L245 672 183 668z"/>
<path fill="#216466" stroke="none" d="M299 568C380 660 450 770 545 808L440 770 245 672z"/>
<path fill="url(#d)" d="M260 370Q268 290 325 293 370 298 405 332z"/>
<path fill="#40484a" d="M405 330Q440 345 490 318 560 310 600 370 620 420 650 430C780 470 900 560 925 700Q930 770 880 826L935 870 830 955Q780 975 730 940 690 910 680 880 660 850 630 845L540 808C460 770 380 640 300 560Q240 490 241 420 250 320 405 330z"/>
<path fill="#454e50" d="M450 590Q450 480 580 483C720 490 850 600 845 700 840 800 700 805 690 798 560 790 455 680 450 590z"/>
<path fill="#3f484a" stroke="none" d="M525 490Q730 500 825 640 620 640 525 490z"/>
<path d="M456 241L300 555 163 832"/>
<ellipse cx="536" cy="385" rx="44" ry="36" fill="#3f4749" stroke="#22292b"/><ellipse cx="758" cy="897" rx="44" ry="35" fill="#3f4749" stroke="#22292b"/>
<path d="M505 365Q520 400 575 395M510 378Q530 405 570 405M515 390Q530 410 560 414M728 877Q745 915 798 908M732 890Q750 920 792 918M740 903Q755 922 780 924" stroke="#5a6365"/>
</g>
<g fill="none" stroke-width="2">
<path stroke="#137a1c" d="M391 832l12-52"/><path fill="#137a1c" stroke="none" d="M405 771l-5 14 7 2z"/>
<path stroke="#e02f2f" d="M391 832l78 27"/><path fill="#e93636" stroke="none" d="M489 867l-20-12-2 8z"/>
<path stroke="#1746e0" d="M391 832l-26 62"/><path fill="#1746e0" stroke="none" d="M359 909l1-18 9 3z"/>
<path fill="#137a1c" stroke="none" d="M574 828l3-18 4-10 2 10z"/>
<path stroke="#e02f2f" stroke-width="1" d="M576 832l28 8"/><path fill="#e93636" stroke="none" d="M627 850l-24-13-2 6z"/>
<path fill="#1746e0" stroke="none" d="M573 834l-16 34 0 5 8-5z"/>
</g>
<text x="386" y="770" fill="#3a8c24">YM</text><text x="471" y="882" fill="#e03a3a">XM</text><text x="362" y="922" fill="#3a50dc">ZM</text>
<text x="563" y="797" fill="#2f9a33">YC</text><text x="610" y="865" fill="#e03a3a">XC</text><text x="559" y="886" fill="#2346d8">ZC</text>
</svg>`);

const tick = '<svg class="tick" viewBox="0 0 14 14"><path fill="#1dbb3c" stroke="#0d8a28" stroke-width=".6" d="M1 7l3-1 2 3 5-8 2 1-6 11H5z"/></svg>';
define('scroll-bar', ':host{display:flex;height:16px;background:#ececec;align-items:center;flex:none}svg{width:7px;height:9px;margin:0 6px;flex:none}b{height:15px;background:#c8c8c8;width:var(--thumb)}.r{margin-left:auto}',
  el => '<svg viewBox="0 0 7 9" fill="none" stroke="#444" stroke-width="2"><path d="M6 1L2 4.5 6 8"/></svg><b></b>' + (el.hasAttribute('both') ? '<svg class="r" viewBox="0 0 7 9" fill="none" stroke="#444" stroke-width="2"><path d="M1 1l4 3.5L1 8"/></svg>' : ''));

const GRID = `table{border-collapse:separate;border-spacing:0;table-layout:fixed}
th{font-weight:400;text-align:left;background:#ececec;border-bottom:1px solid #c9c9c9;border-right:1px solid #d6d6d6;height:21px;padding:0 0 0 6px;line-height:16px;white-space:nowrap}
td{height:20px;padding:0 0 0 4px;border-bottom:1px solid #eaeaea;border-right:1px solid #ececec;line-height:16px;white-space:nowrap;overflow:hidden}
tr:nth-child(even) td{background:#f8f8f8}td:first-child{border-right-color:#111}`;
define('operation-navigator', GRID + `:host{display:flex;flex-direction:column;width:470px;flex:none;padding-left:34px;background:#fdfdfd;overflow:hidden}
section{flex:1;display:flex;flex-direction:column;border-left:2px solid #8b8b8b;padding-left:8px;min-height:0}
h2{font:inherit;margin:0;height:50px;flex:none;padding:28px 0 0 111px}
.box{flex:1;min-height:0;border-left:1px solid #c9c9c9;border-top:1px solid #c9c9c9;overflow:hidden}
table{width:440px}
.tick{width:13px;height:14px;display:block;margin-left:2px}
td.name{padding-left:0}td.name>span{display:flex;align-items:center}
.tree .tick,.warn{width:13px;height:15px;margin:0 3px 0 0;flex:none}.fold{width:15px;height:14px;margin-right:3px}
.dots{width:21px;height:19px;flex:none}
.foot{height:6px;background:#d2d2d2;border:1px solid #999;border-width:1px 0;margin-top:2px;margin-bottom:6px;flex:none}
td.name>.right{justify-content:flex-end}`,
  () => {
    const rows = Array.from({ length: 37 }, () => ['', '', '', '', '']);
    const fold = '<svg class="fold" viewBox="0 0 15 14"><path fill="#f3dc8c" stroke="#8d6b1a" d="M1 2h5l1 2h7v9.5H1z"/><path fill="none" stroke="#1d2290" stroke-width="1.3" d="M7 6h5v6H7M8 9h4"/></svg>';
    const dots = last => `<svg class="dots" viewBox="0 0 21 19"><path stroke="#999" stroke-dasharray="1 1" d="M11.5 0v${last ? 10 : 19}M12 9.5h9"/></svg>`;
    const warn = '<svg class="warn" viewBox="0 0 13 15"><path fill="#ffe92e" stroke="#a08a10" d="M4 1h5l-1 8H5z"/><circle cx="6.5" cy="12.5" r="1.5" fill="#ffe92e" stroke="#a08a10"/></svg>';
    rows[7][0] = '<span style="padding-left:116px">Z01</span>';
    rows[8] = ['<span class="right" style="padding-right:3px">腔铣_COPY_1_CO...</span>', tick, 'D12', '0', '.45 mm'];
    rows[9] = ['<span class="right" style="padding-right:10px">CONTOUR_AREA_1</span>', tick, 'D12', '0', ''];
    rows[10][0] = '<span style="padding-left:116px">Z02</span>';
    rows[29][0] = `<span class="tree">${dots()}${tick}${fold}</span>`;
    rows[30][0] = `<span class="tree">${dots()}${tick}${fold}A20</span>`;
    rows[31][0] = `<span class="tree">${dots(1)}${warn}${fold}PROGRAM</span>`;
    return `<section><h2>序顺序</h2><div class="box"><table><colgroup><col style="width:214px"><col style="width:44px"><col style="width:83px"><col style="width:49px"><col style="width:50px"></colgroup><thead><tr><th></th><th>刀轨</th><th>刀具</th><th>刀具号</th><th>切削深度</th></tr></thead><tbody>`
      + rows.map(r => '<tr>' + r.map((c, i) => `<td${i ? '' : ' class="name"'}>${c}</td>`).join('') + '</tr>').join('')
      + '</tbody></table></div><scroll-bar style="--thumb:246px"></scroll-bar><div class="foot"></div></section>';
  });

/* ---------- layer settings dialog ---------- */
define('dialog-section', `:host{display:block;background:#fdfdfd;border-bottom:1px solid #bdbdbd;box-shadow:0 1px 1px #d8d8d8;margin-bottom:3px;padding:0 9px}
header{display:flex;align-items:center;height:28px;margin:0 -6px 0 -1px;font-size:14px;color:#17657c}
:host([closed]) header{height:24px}
button{margin-left:auto;width:14px;height:14px}svg{display:block;width:12px;height:11px;fill:none;stroke:#17657c;stroke-width:2}`,
  el => `<header><span>${el.getAttribute('title-text')}</span><button aria-label="折叠"><svg viewBox="0 0 12 11"><path d="${el.hasAttribute('closed') ? 'M2 1l4 8 4-8' : 'M2 9l4-8 4 8'}"/></svg></button></header><slot></slot>`);

define('layer-table', GRID + `:host{display:block;border:1px solid #cfcfcf;border-top:2px solid #cfcfcf;height:331px;position:relative}
.box{height:311px;overflow:hidden}table{width:297px}th{height:20px}td:last-child,th:last-child{border-right:0}
td:nth-child(2){padding-left:6px}
input{appearance:none;width:12px;height:12px;border:1px solid #111;background:#fff;display:block;flex:none}
.n{display:flex;align-items:center;height:19px}.n svg{flex:none}.dots{width:22px;height:19px}
.n label{margin-left:5px}.rel{position:relative;display:flex}.rel svg{position:absolute;left:0;top:0;width:13px;height:12px}
th svg{width:9px;height:5px;margin-left:18px;vertical-align:2px}
tr.sel td{background:#8abfd0;border-top:1px dotted #222;border-bottom:1px dotted #222;font-weight:700;line-height:14px}
tr.sel td:first-child{background:linear-gradient(#8abfd0,#8abfd0) 37px 0 no-repeat;border-top:0;border-bottom:0}
tr.sel .n,tr.sel .dots{height:20px}tr.sel .w{flex:1;margin-left:1px;padding-left:1px;line-height:18px;border:1px dotted #222;border-right:0}
.lay{width:16px;height:16px;margin-left:-2px}
.ball{position:absolute;left:170px;top:59px;width:58px;height:58px;border-radius:50%;background:#ff0;mix-blend-mode:multiply}
.cur{position:absolute;left:199px;top:90px;width:14px;height:20px}
td:first-child{padding-left:0}`,
  () => {
    const data = [['1', 78], ['2', 25], ['3', 53], ['4(工作)', 14], ['5', 17], ['100', 1]];
    const lay = '<svg class="lay" viewBox="0 0 16 16"><path fill="#fff" stroke="#888" d="M1 12l7-3 7 3-7 3zM1 9l7-3 7 3-7 3zM1 6l7-3 7 3-7 3z"/><path fill="none" stroke="#1e2070" d="M3 4h3l2-2 2 2h3"/><path fill="#1e2070" d="M1 3h3v3H1zM7 1h3v3H7zM12 3h3v3h-3z"/></svg>';
    let h = '';
    for (let i = 0; i < 15; i++) {
      const d = data[i];
      if (!d) { h += '<tr><td></td><td></td><td></td></tr>'; continue; }
      const dots = `<svg class="dots" viewBox="0 0 22 19"><path stroke="#999" stroke-dasharray="1 1" d="M10.5 ${i ? 0 : 9}v${i && i < 5 ? 19 : 10}M11 9.5h10"/></svg>`;
      const mark = i === 2 ? '<svg viewBox="0 0 13 12"><path fill="#d8222b" d="M1 6l3-2 2 3 5-7 2 1-6 10H5z"/></svg>' : '';
      const sel = i === 3;
      h += `<tr class="${sel ? 'sel' : ''}"><td><span class="n">${dots}${sel ? lay + '<span class="w">' + d[0] + '</span>' : `<span class="rel"><input type="checkbox" id="l${i}"${i === 2 ? ' checked' : ''}>${mark}</span><label for="l${i}">${d[0]}</label>`}</span></td><td>${sel ? '' : '<input type="checkbox" aria-label="仅可见">'}</td><td>${d[1]}</td></tr>`;
    }
    return `<div class="box"><table><colgroup><col style="width:151px"><col style="width:85px"><col></colgroup><thead><tr><th>名称<svg viewBox="0 0 9 5"><path d="M0 5h9L4.5 0z" fill="#222"/></svg></th><th>仅可见</th><th>对象数</th></tr></thead><tbody>${h}</tbody></table></div><scroll-bar both style="--thumb:143px"></scroll-bar><div class="ball"></div><svg class="cur" viewBox="0 0 14 20"><path fill="#f0149a" stroke="#222" d="M1 1v14l3-3 3 6 3-1-3-6h5z"/></svg>`;
  });

define('layer-dialog', `:host{position:absolute;right:310px;top:91px;width:328px;background:#ededed;border:1px solid #cfcfcf;border-top:0;padding:0 5px;display:block}
.bar{height:24px;margin:0 -6px 2px;background:#54a0b8;color:#f4fcff;font-size:14px;display:flex;align-items:center;padding:0 8px 0 7px}
.bar svg{width:14px;height:14px;margin-right:8px}.bar span{flex:1}.bar button svg{margin:0 0 0 6px;display:block}
.pick{display:flex;gap:2px;height:32px;margin:4px 0 7px}
.pick button{background:#fde179}.pick button:first-child{flex:1;text-align:left}.pick button+button{width:32px}.pick svg{width:20px;height:20px;display:block;margin:auto}
.row{display:flex;align-items:center;justify-content:space-between}
.row>input{width:82px;height:23px;border:1px solid #8c8c8c;text-align:right;padding:0 5px;background:#fff;font:15px "Liberation Serif","Noto Sans CJK SC",serif}
combo-box{width:141px;height:24px;--pad:3px}
.chk{display:flex;align-items:center;gap:4px;height:16px}.chk input{appearance:none;width:13px;height:13px;border:1px solid #222;background:#fff}
.cat{width:32px;height:32px;border:1px solid #999;background:#fff;display:flex;align-items:center;justify-content:center}.cat svg{width:24px;height:24px}
.sub{display:flex;align-items:center;width:100%;height:24px;background:#ececec;border:1px solid #d2d2d2;color:#17657c;padding:0 5px 0 8px;margin:2px 0 8px}
.sub svg{margin-left:auto;width:12px;height:9px}
.off{color:#a6a6a6}
footer{display:flex;justify-content:flex-end;padding:7px 10px 10px 0}footer button{width:54px;height:25px;background:#72b2c3;color:#f4fcff}`,
`<div class="bar"><svg viewBox="0 0 14 14" fill="none" stroke="#fff"><circle cx="7" cy="7" r="4" stroke-width="2"/><path stroke-width="2" d="M7 0v3M7 11v3M0 7h3M11 7h3M2 2l2 2M10 10l2 2M12 2l-2 2M2 12l2-2"/></svg><span>图层设置</span><button aria-label="重置"><svg viewBox="0 0 14 14" fill="none" stroke="#fff" stroke-width="1.8"><path d="M8 2a5 5 0 1 1-6 5M1 4h4v4"/></svg></button><button aria-label="关闭"><svg viewBox="0 0 14 14" stroke="#fff" stroke-width="2"><path d="M2 2l10 10M12 2L2 12"/></svg></button></div>
<dialog-section title-text="查找以下对象所在的图层"><div class="pick"><button>选择对象 (0)</button><button aria-label="选择对象"><svg viewBox="0 0 20 20" fill="none" stroke="#222"><circle cx="10" cy="10" r="5" stroke="#d0401c" stroke-width="1.5"/><path d="M0 10h20M10 0v20" stroke-width="1.3"/></svg></button></div></dialog-section>
<dialog-section title-text="工作层"><div class="row" style="height:28px;margin-bottom:5px"><label for="wl">工作层</label><input id="wl" value="4"></div></dialog-section>
<dialog-section title-text="图层">
<div class="row" style="height:30px"><label for="rg">按范围/类别选择图层</label><input id="rg"></div>
<div class="chk"><input type="checkbox" id="cs"><label for="cs">类别显示</label></div>
<div class="row off" style="height:33px"><span>类别过滤器</span><combo-box off label="类别过滤器" value="*"></combo-box></div>
<layer-table></layer-table>
<div class="row" style="height:29px"><span>显示</span><combo-box label="显示" value="含有对象的图层"></combo-box></div>
<div class="row"><span>添加类别</span><button class="cat" aria-label="添加类别"><svg viewBox="0 0 24 24" fill="#e9f4ee" stroke="#456"><path fill="#b9c4c0" stroke="#8a958f" d="M2 18l10-4 10 4-10 5z"/><path fill="#7fc392" d="M2 15l10-4 10 4-10 4z"/><path fill="#dff2e6" d="M2 11l10-4 10 4-10 4z"/><path fill="#7fc392" d="M2 8l10-4 10 4-10 4z"/><path d="M2 5l10-4 10 4-10 4z"/></svg></button></div>
<button class="sub">图层控制<svg viewBox="0 0 12 9" fill="none" stroke="#17657c" stroke-width="2"><path d="M2 1l4 7 4-7"/></svg></button>
</dialog-section>
<dialog-section title-text="设置" closed></dialog-section>
<footer><button>关闭</button></footer>`);

define('nx-app', `:host{display:flex;flex-direction:column;height:100vh;position:relative;overflow:hidden}
.row{display:flex;overflow:hidden;flex:none}.pad{padding-left:7px}.pad2{padding-left:2px}.last{border-bottom:2px solid #8f8f8f}
.mid{flex:1;display:flex;min-height:0}.left{flex:1;min-width:0;display:flex;flex-direction:column}
.cue{margin:0;height:20px;padding:1px 0 0 7px;font-size:11px;font-weight:700}
.scope{width:140px;height:20px;align-self:center;margin:0 4px 0 7px}
.stub{width:10px;height:20px;align-self:center;overflow:hidden;display:flex;justify-content:flex-end}.stub combo-box{flex:none;width:60px}
.tight{--grip:5px}.next{margin-left:22px}.inset{padding-left:4px}`,
`<title-bar></title-bar><menu-bar></menu-bar>
<div class="row pad"><tool-group items="save | cut copy paste del | undo v | layers v | square v | info | # _ | : fit v orient v cube v plane plane2 v window v | section sectionC csys _ | : layersG layersG2 v | brush nodes v palG | dia v | measure v ruler _ |"><command-search></command-search></tool-group></div>
<div class="row pad2"><tool-group class="tight" items="feat v block asm crack v _ | : t1 t2 t3 t4 t5 t6 t7 | t8 t9 t10 _ |"></tool-group><tool-group class="tight next" items=": c1 c2 c3 c4 c5 c6 c7 _ | : arc bigA offs surf proj surf2 mir trimc _ | : t1 t2 t3 t4 t5 t6 t7 t8 t9 t9 t6 t8 nodes v _ |"></tool-group></div>
<div class="row"><tool-group grow class="tight inset" items="u1 u2 u3 u4 u5 u6 t9 u7 u8 u9 u10 u11 u12 u13 u14 u15 u16 u17 u18 u19 _ | : w1 t3 +hatchB +hatchR circ spl p1 p2 p3 cali tc1 tc2 tc3 tc1 tc2 u1 u2 u3 u4 u5 u6 u7 v | arw rot sq2 ped bx bx2 rR iso sw bar"></tool-group></div>
<div class="row last"><div class="stub"><combo-box label="过滤器" value=""></combo-box></div><combo-box class="scope" label="选择范围" value="整个装配"></combo-box><tool-group big items="as | fG fC v undoX bino | hex hexC rect v | sweep box3 nodes"></tool-group></div>
<div class="mid"><div class="left"><p class="cue">对图层执行 MB3 以将对象移动或复制到图层</p><file-tabs></file-tabs><cad-viewport></cad-viewport></div><operation-navigator></operation-navigator></div>
<layer-dialog></layer-dialog>`);
</script>
</body>
</html>
